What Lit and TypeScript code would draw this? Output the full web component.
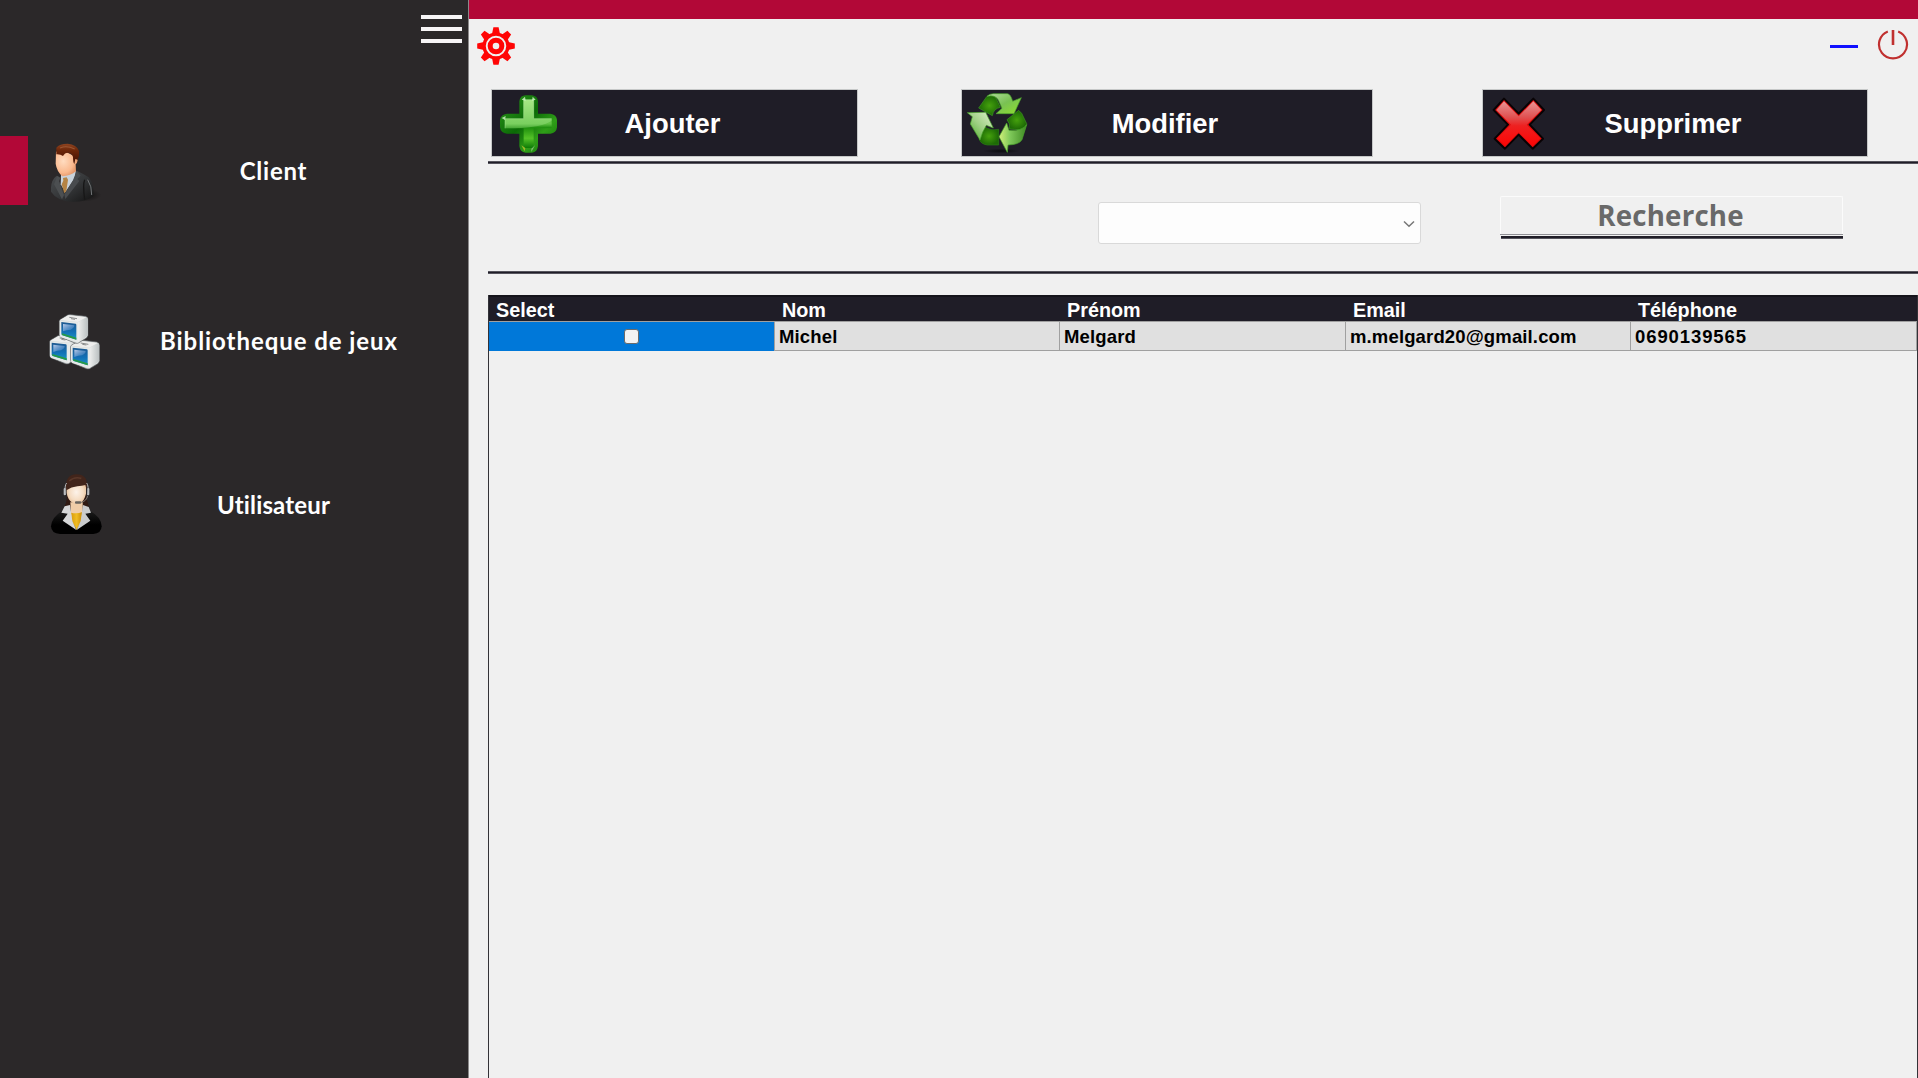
import { LitElement, html, css, svg } from "lit";
import { customElement, property } from "lit/decorators.js";

const clientIcon = svg`
  <svg width="70" height="80" viewBox="0 0 210 240">
    <defs>
      <linearGradient id="c-suit" x1="0" y1="0" x2="1" y2="1">
        <stop offset="0" stop-color="#4d5052"/><stop offset=".5" stop-color="#36383a"/><stop offset="1" stop-color="#131313"/>
      </linearGradient>
      <radialGradient id="c-face" cx=".35" cy=".4" r=".75">
        <stop offset="0" stop-color="#ffdcc0"/><stop offset=".6" stop-color="#fab98e"/><stop offset="1" stop-color="#d98454"/>
      </radialGradient>
      <linearGradient id="c-hair" x1="0" y1="0" x2="0" y2="1">
        <stop offset="0" stop-color="#8f4420"/><stop offset=".35" stop-color="#6b2508"/><stop offset="1" stop-color="#3f0f02"/>
      </linearGradient>
      <radialGradient id="c-shadow"><stop offset="0" stop-color="#0c0b0b"/><stop offset="1" stop-color="#0c0b0b" stop-opacity="0"/></radialGradient>
    </defs>
    <ellipse cx="128" cy="192" rx="56" ry="20" fill="url(#c-shadow)"/>
    <path d="M50 134 Q34 146 33 170 V182 Q50 208 92 212 Q138 214 161 194 Q162 158 146 139 Q130 128 110 119 L76 190 Z" fill="url(#c-suit)"/>
    <path d="M63 132 L108 118 L104 142 L76 184 L62 160 Z" fill="#c9d2da"/>
    <path d="M69 141 L80 139 L84 146 L79 180 L73 187 L65 160 L70 149 Z" fill="#b58343"/>
    <path d="M110 119 L122 134 L112 144 L118 150 L76 204 L73 190 L99 148 Z" fill="#484b4e"/>
    <path d="M52 134 L61 140 L57 152 L72 192 L66 205 L42 160 Z" fill="#4c4f51"/>
    <path d="M134 146 Q128 160 134 206" stroke="#171717" stroke-width="4" fill="none"/>
    <path d="M143 146 Q156 166 155 192" stroke="#737678" stroke-width="3" fill="none"/>
    <path d="M48 62 Q70 54 102 76 L104 84 Q112 80 113 88 Q112 96 107 100 L108 121 Q92 134 67 136 Q50 120 47 98 Z" fill="url(#c-face)"/>
    <path d="M49 70 L49 50 Q58 38 83 38 Q110 40 117 60 Q119 76 113 86 L106 84 L103 99 Q99 94 99 78 Q96 66 84 65 Q74 65 69 75 Q61 69 49 70 Z" fill="url(#c-hair)"/>
    <path d="M60 51 Q80 42 104 54" stroke="#b0704a" stroke-width="3.5" fill="none" opacity=".6"/>
  </svg>`;

const cube = (x: number, y: number) => svg`
  <g transform="translate(${x} ${y})">
    <path d="M3 17 L26 3 Q30 1 38 2 L80 7 Q87 10 87 16 V64 Q86 70 81 73 L58 87 Q53 89 48 87 L6 70 Q1 67 1 62 V22 Q1 19 3 17 Z" fill="#d5dad9" stroke="#55585a" stroke-width="2"/>
    <path d="M3 18 L28 4 L81 10 L57 24 Z" fill="#eeeeed"/>
    <path d="M57 25 L84 10 Q87 13 87 18 V64 L56 86 Z" fill="url(#q-side)"/>
    <path d="M2 20 L57 25 V86 L6 70 Q1 67 2 62 Z" fill="#e6e9e8"/>
    <path d="M7 24 L50 29 Q52 30 52 33 V77 L10 64 Q7 62 7 59 Z" fill="url(#q-screen)"/>
    <path d="M9 63 V58 L52 71 V77 Z" fill="#279a45"/>
    <path d="M12 30 L46 34 Q47 41 35 47 Q23 47 12 52 Z" fill="url(#q-gloss)"/>
    <path d="M31 10 L54 14 M36 14 L48 16" stroke="#8a8c8c" stroke-width="3" fill="none"/>
  </g>`;

const cubesIcon = svg`
  <svg width="70" height="80" viewBox="0 0 210 240">
    <defs>
      <linearGradient id="q-side" x1="0" y1="0" x2="1" y2="0"><stop offset="0" stop-color="#f0f1f0"/><stop offset="1" stop-color="#b9bfc0"/></linearGradient>
      <linearGradient id="q-screen" x1="0" y1="0" x2="0" y2="1"><stop offset="0" stop-color="#1f588f"/><stop offset=".55" stop-color="#1270b6"/><stop offset="1" stop-color="#1c93c4"/></linearGradient>
      <linearGradient id="q-gloss" x1="0" y1="0" x2="1" y2="1"><stop offset="0" stop-color="#bccdea"/><stop offset="1" stop-color="#3b7fc4" stop-opacity=".4"/></linearGradient>
    </defs>
    ${cube(28, 101)}
    ${cube(91, 116)}
    ${cube(57, 39)}
  </svg>`;

const userIcon = svg`
  <svg width="70" height="80" viewBox="0 0 210 240">
    <defs>
      <radialGradient id="u-face" cx=".5" cy=".5" r=".6"><stop offset="0" stop-color="#fdf3ea"/><stop offset=".6" stop-color="#f5dcc2"/><stop offset="1" stop-color="#e3b98f"/></radialGradient>
      <linearGradient id="u-shirt" x1="0" y1="0" x2="1" y2="0"><stop offset="0" stop-color="#d89b0c"/><stop offset=".5" stop-color="#f0bc22"/><stop offset="1" stop-color="#c98a05"/></linearGradient>
      <linearGradient id="u-coat" x1="0" y1="0" x2="0" y2="1"><stop offset="0" stop-color="#1b1b1b"/><stop offset=".6" stop-color="#000"/></linearGradient>
    </defs>
    <path d="M80 86 Q82 110 74 124 L82 138 H140 L146 122 Q138 104 138 84 Z" fill="#301a13"/>
    <path d="M66 138 Q34 158 33 184 Q34 206 60 207 H160 Q184 206 185 184 Q184 156 150 138 Z" fill="url(#u-coat)"/>
    <path d="M91 112 H128 V145 L126 168 L110 184 L94 166 Z" fill="#f0cda8"/>
    <path d="M93 143 Q110 148 127 141 L124 168 L110 195 L97 172 Z" fill="url(#u-shirt)"/>
    <path d="M90 120 L74 124 L64 143 L83 146 L68 167 L109 195 L97 168 Z" fill="#d6d7d8"/>
    <path d="M129 120 L146 126 L153 143 L136 146 L151 167 L110 195 L122 168 Z" fill="#cacccd"/>
    <path d="M80 60 Q108 34 138 60 V86 Q132 110 120 114 Q108 118 97 113 Q83 104 80 84 Z" fill="url(#u-face)"/>
    <path d="M79 76 Q73 28 110 28 Q147 28 140 74 L136 60 Q126 62 112 64 Q94 66 79 76 Z" fill="#42251b"/>
    <path d="M88 48 Q102 34 124 40" stroke="#6f4a38" stroke-width="5" fill="none" opacity=".5"/>
    <path d="M80 54 Q73 60 76 90 M140 54 Q147 62 143 90" stroke="#b3b4b6" stroke-width="3" fill="none"/>
    <rect x="71" y="69" width="6" height="22" rx="3" fill="#b9bcbf"/>
    <rect x="142" y="69" width="6" height="22" rx="3" fill="#b9bcbf"/>
    <path d="M143 92 Q140 108 124 112" stroke="#8e8a86" stroke-width="2.5" fill="none"/>
    <rect x="105" y="109" width="19" height="7" rx="3" fill="#6a655f"/>
  </svg>`;

const plusIcon = svg`
  <svg width="65" height="66" viewBox="285 270 195 198">
    <defs>
      <linearGradient id="p-out" x1="0" y1="0" x2="1" y2="1"><stop offset="0" stop-color="#2f9a1d"/><stop offset=".45" stop-color="#0b6a06"/><stop offset=".7" stop-color="#2f9e18"/><stop offset="1" stop-color="#0d6d05"/></linearGradient>
      <linearGradient id="p-in" x1="0" y1="0" x2="0" y2="1"><stop offset="0" stop-color="#a2e47c"/><stop offset=".5" stop-color="#5fc243"/><stop offset=".58" stop-color="#1f8f0e"/><stop offset=".8" stop-color="#55c228"/><stop offset="1" stop-color="#0c7a06"/></linearGradient>
    </defs>
    <path d="M355 304 Q357 286 374 286 H393 Q410 288 411 304 V341 H448 Q467 344 468 360 V382 Q466 400 448 401 H411 V438 Q409 456 393 458 H374 Q357 456 355 438 V401 H318 Q299 399 297 382 V360 Q299 343 318 341 H355 Z" fill="url(#p-out)"/>
    <path d="M368 299 H398 V356 H452 V385 H398 V444 H368 V385 H312 V356 H368 Z" fill="url(#p-in)"/>
    <path d="M312 356 H368 V299 H398 V356 H452 V362 Q424 382 340 385 H312 Z" fill="#b6efa0" opacity=".3"/>
    <path d="M368 356 V299 H398 V356 H452 M312 385 V356 H368" fill="none" stroke="#b9eda8" stroke-width="2" opacity=".65"/>
    <path d="M362 299 L372 290 L374 302 Z M404 299 L395 290 L393 302 Z M302 354 L314 348 L312 360 Z" fill="#d5f6cb" opacity=".8"/>
    <path d="M361 436 L373 444 L371 454 Z" fill="#9fb92a"/>
    <path d="M402 436 L391 446 L391 456 Z" fill="#81bf76"/>
  </svg>`;

const recycleIcon = svg`
  <svg width="67" height="66" viewBox="69 60 201 198">
    <defs>
      <linearGradient id="r-a" x1="0" y1="0" x2="1" y2="1"><stop offset="0" stop-color="#b5dfa0"/><stop offset=".5" stop-color="#79c153"/><stop offset="1" stop-color="#8fe02c"/></linearGradient>
      <linearGradient id="r-b" x1="1" y1="0" x2="0" y2="1"><stop offset="0" stop-color="#e2f0cf"/><stop offset=".5" stop-color="#9fd084"/><stop offset="1" stop-color="#42a81e"/></linearGradient>
      <linearGradient id="r-c" x1="0" y1="0" x2="1" y2="0"><stop offset="0" stop-color="#d2f07a"/><stop offset=".4" stop-color="#7fc95a"/><stop offset="1" stop-color="#3f8a23"/></linearGradient>
      <radialGradient id="r-d"><stop offset="0" stop-color="#45a10d"/><stop offset="1" stop-color="#1d6a05"/></radialGradient>
      <radialGradient id="r-s"><stop offset="0" stop-color="#0b0b0e"/><stop offset="1" stop-color="#0b0b0e" stop-opacity="0"/></radialGradient>
    </defs>
    <ellipse cx="184" cy="243" rx="56" ry="7" fill="url(#r-s)"/>
    <path d="M140 80 Q158 72 168 84 L181 112 Q160 116 157 137 L116 114 Z" fill="url(#r-d)" stroke="#3c9422" stroke-width="2"/>
    <path d="M141 79 Q148 71 160 71 H202 Q212 72 218 94 L244 83 L222 131 L168 131 L186 115 L175 90 Q164 73 141 79 Z" fill="url(#r-a)" stroke="#4aa62c" stroke-width="2"/>
    <path d="M236 121 L245 130 L260 161 Q258 177 237 179 L209 177 Q211 160 201 149 Z" fill="url(#r-d)" stroke="#3c9422" stroke-width="2"/>
    <path d="M260 164 L246 209 Q238 224 204 225 L202 247 L177 200 L200 159 L207 181 Q246 184 260 164 Z" fill="url(#r-c)" stroke="#4aa62c" stroke-width="2"/>
    <path d="M135 172 Q156 184 176 178 V225 H142 Q123 222 118 209 Q119 190 135 172 Z" fill="url(#r-d)" stroke="#2c7d17" stroke-width="2"/>
    <path d="M82 128 L137 127 L160 174 L139 166 Q126 186 120 210 L91 162 L97 140 Z" fill="url(#r-b)" stroke="#4aa62c" stroke-width="2"/>
  </svg>`;

const crossIcon = svg`
  <svg width="62" height="66" viewBox="144 270 186 198">
    <defs><linearGradient id="x-r" x1="0" y1="0" x2="0" y2="1"><stop offset="0" stop-color="#e89494"/><stop offset=".35" stop-color="#e05252"/><stop offset=".55" stop-color="#ee2020"/><stop offset="1" stop-color="#fd0505"/></linearGradient></defs>
    <path d="M192 296 L236 341 L280 296 L312 330 L269 374 L309 416 L278 446 L236 404 L195 446 L164 416 L204 374 L161 330 Z" fill="#e00909" stroke="#080204" stroke-width="6" stroke-linejoin="round"/>
    <path d="M192 304 L236 349 L280 304 L304 330 L260 374 L301 415 L278 438 L236 397 L195 438 L172 415 L213 374 L169 330 Z" fill="url(#x-r)"/>
  </svg>`;

const gearIcon = svg`
  <svg width="40" height="40" viewBox="-20 -20 40 40">
    <g fill="#ff0505">
      ${[0, 45, 90, 135, 180, 225, 270, 315].map(
        (a) => svg`<path transform="rotate(${a})" d="M-4 -12 L-2.6 -18.8 H2.6 L4 -12 Z"/>`
      )}
      <circle r="13.6"/>
    </g>
    <circle r="9.3" fill="none" stroke="#f0f0f0" stroke-width="1.9"/>
    <circle r="3.3" fill="#f0f0f0"/>
  </svg>`;

@customElement("nav-item")
class NavItem extends LitElement {
  @property() label = "";
  @property({ type: Boolean, reflect: true }) active = false;
  static styles = css`
    :host { display: grid; grid-template: 69px / 27.5px 1fr; height: 69px; align-items: center; }
    .mark { height: 69px; }
    :host([active]) .mark { background: #b20837; }
    .body { display: flex; align-items: center; padding-left: 12.5px; }
    .label {
      flex: 1; text-align: center; color: #fff; white-space: nowrap;
      font: 700 24px/30px "Lato", sans-serif; letter-spacing: var(--track, 0);
      padding: 1px var(--pad-right, 32px) 0 0;
    }
    ::slotted(*) { display: block; flex: none; }
  `;
  render() {
    return html`<div class="mark"></div>
      <div class="body"><slot></slot><div class="label">${this.label}</div></div>`;
  }
}

@customElement("action-button")
class ActionButton extends LitElement {
  @property() label = "";
  static styles = css`
    :host { display: grid; height: 66px; background: #1f1d27; outline: 1px solid #c6c8c8; outline-offset: -0.3px; align-items: center; }
    .icon, .label { grid-area: 1 / 1; }
    .icon { padding-left: var(--icon-gap, 4px); height: 66px; }
    .label { text-align: center; color: #fff; font: 700 27.4px/32px "Liberation Sans", Arial, sans-serif; padding: 1px 3px 0 0; }
  `;
  render() {
    return html`<div class="icon"><slot></slot></div><div class="label">${this.label}</div>`;
  }
}

@customElement("app-root")
class AppRoot extends LitElement {
  static styles = css`
    :host { display: flex; width: 100vw; height: 100vh; overflow: hidden; background: #f0f0f0; font-family: "Liberation Sans", Arial, sans-serif; }
    svg { display: block; }
    .side { flex: none; width: 468px; box-sizing: border-box; background: #2b2829; display: flex; flex-direction: column; }
    .burger { align-self: flex-end; width: 40.5px; margin: 14.5px 6.5px 0 0; height: 28.5px; display: flex; flex-direction: column; justify-content: space-between; }
    .burger span { height: 4px; background: #f7f5f6; }
    .nav { display: flex; flex-direction: column; margin-top: 93px; }
    .n1 { --track: 0.75px; --pad-right: 31px; }
    .n2 { margin-top: 101px; --track: 0.93px; --pad-right: 20px; }
    .n3 { margin-top: 95px; --track: 0.15px; --pad-right: 31px; }
    .main { flex: 1; min-width: 0; display: flex; flex-direction: column; border-left: 1px solid #8b898a; }
    .top { height: 18.5px; flex: none; background: #b20837; }
    .tools { height: 71.5px; display: flex; flex: none; box-sizing: border-box; padding: 7.5px 9.5px 0 7px; }
    .window { margin-left: auto; display: flex; gap: 19px; padding-top: 0.5px; }
    .min { width: 28px; height: 3px; background: #1010ff; margin-top: 18.5px; }
    .content { padding-left: 19px; display: flex; flex-direction: column; flex: 1; min-height: 0; }
    .actions { display: flex; padding-left: 3.5px; height: 66px; flex: none; }
    .a1 { width: 365px; }
    .a2 { width: 410px; margin-left: 105px; --icon-gap: 1.5px; }
    .a3 { width: 384px; margin-left: 111px; --icon-gap: 5.5px; }
    .rule { height: 3px; flex: none; background: #1f1d27; box-sizing: border-box; border: solid #55545c; border-width: 1px 0; margin-left: -0.5px; }
    .r1 { margin-top: 5px; }
    .filter { display: flex; height: 107px; flex: none; }
    .combo { box-sizing: border-box; margin: 38px 0 0 609.5px; width: 323px; height: 42px; background: #fdfdfd; border: 1.5px solid #d9d9d9; border-radius: 3px; display: flex; align-items: center; justify-content: flex-end; padding: 1px 4.5px 0 0; }
    .search { margin: 32px 0 0 79px; width: 343px; }
    .search-btn { box-sizing: border-box; height: 38px; border: 1.5px solid #fbfbfb; border-bottom: 0; text-align: center; color: #696969; font: 700 27.7px/36px "Open Sans", sans-serif; letter-spacing: 0.2px; box-shadow: 0 1px 0 #8f8f94; padding-right: 1px; border-radius: 2px 2px 0 0; }
    .search-line { height: 3px; margin: 2px 0 0 1px; background: #1f1d27; box-sizing: border-box; border-bottom: 1px solid #55545c; }
    .grid { margin-top: 21px; flex: 1; border-left: 1.5px solid #333237; border-right: 1.5px solid #333237; box-sizing: border-box; }
    .head, .row { display: grid; grid-template-columns: 286px 285px 286px 285px 1fr; box-sizing: border-box; }
    .head { height: 26px; background: #1f1d27; border-top: 2px solid #15141b; color: #fff; font: 700 19.8px/26px "Liberation Sans", Arial, sans-serif; }
    .head div { padding-left: 7px; }
    .row { height: 30px; border: solid #a0a0a0; border-width: 1px 0; background: #e0e0e0; color: #000; font: 700 18.5px/29px "Liberation Sans", Arial, sans-serif; }
    .cell { border-right: 1px solid #a0a0a0; padding-left: 4px; letter-spacing: 0.14px; }
    .cell:last-child { letter-spacing: 0.9px; }
    .cell.sel { background: #0078d9; display: flex; align-items: center; justify-content: center; padding: 0 0 1px; }
    .box { width: 13px; height: 13px; background: #f3f3f3; border: 1.3px solid #6b6b6b; border-radius: 3px; }
  `;

  private columns = ["Select", "Nom", "Prénom", "Email", "Téléphone"];
  private record = ["Michel", "Melgard", "m.melgard20@gmail.com", "0690139565"];

  render() {
    return html`
      <div class="side">
        <div class="burger"><span></span><span></span><span></span></div>
        <div class="nav">
          <nav-item class="n1" label="Client" active>${clientIcon}</nav-item>
          <nav-item class="n2" label="Bibliotheque de jeux">${cubesIcon}</nav-item>
          <nav-item class="n3" label="Utilisateur">${userIcon}</nav-item>
        </div>
      </div>
      <div class="main">
        <div class="top"></div>
        <div class="tools">
          ${gearIcon}
          <div class="window">
            <div class="min"></div>
            <svg width="32" height="34" viewBox="-16 -17 32 34" fill="none" stroke="#c0302f" stroke-width="2.2">
              <path d="M-5.2 -12.6 A14 14 0 1 0 5.2 -12.6"/>
              <path d="M0 -14 V1" stroke-width="2.6"/>
            </svg>
          </div>
        </div>
        <div class="content">
          <div class="actions">
            <action-button class="a1" label="Ajouter">${plusIcon}</action-button>
            <action-button class="a2" label="Modifier">${recycleIcon}</action-button>
            <action-button class="a3" label="Supprimer">${crossIcon}</action-button>
          </div>
          <div class="rule r1"></div>
          <div class="filter">
            <div class="combo">
              <svg width="12" height="8" viewBox="0 0 12 8" fill="none" stroke="#777" stroke-width="1.5"><path d="M1 1.5 L6 6.3 L11 1.5"/></svg>
            </div>
            <div class="search">
              <div class="search-btn">Recherche</div>
              <div class="search-line"></div>
            </div>
          </div>
          <div class="rule"></div>
          <div class="grid">
            <div class="head">${this.columns.map((c) => html`<div>${c}</div>`)}</div>
            <div class="row">
              <div class="cell sel"><div class="box"></div></div>
              ${this.record.map((v) => html`<div class="cell">${v}</div>`)}
            </div>
          </div>
        </div>
      </div>`;
  }
}
